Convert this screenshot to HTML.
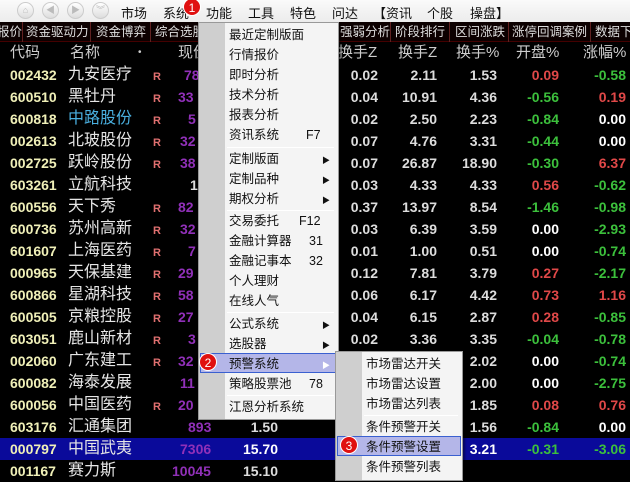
<!DOCTYPE html>
<html><head><meta charset="utf-8"><style>
*{margin:0;padding:0;box-sizing:border-box}
body{width:630px;height:468px;overflow:hidden;background:#000;position:relative;font-family:"Liberation Sans","Noto Sans CJK SC",sans-serif}
.a{position:absolute;white-space:nowrap}
#top{left:0;top:0;width:630px;height:22px;background:linear-gradient(#fafafa,#ececec);font-size:13px;color:#111}
.btn{position:absolute;top:2px;width:17px;height:17px;border-radius:50%;background:linear-gradient(#fff,#ddd);border:1px solid #ccc;color:#bbb;font-size:9px;text-align:center;line-height:15px}
#tabs{left:0;top:22px;width:630px;height:20px;background:#0c0000;border-bottom:1px solid #400;font-size:12.5px;color:#ddd}
#tabs span{position:absolute;top:1px;line-height:18px}
.sep{position:absolute;top:0;width:1px;height:20px;background:#602020}
#hdr{left:0;top:42px;width:630px;height:22px;font-size:15px;color:#ccc;line-height:22px}
.row{position:absolute;left:0;width:630px;height:22px;line-height:22px}
.c{position:absolute;left:10px;font-weight:bold;font-size:14px;color:#f0f0b8}
.n{position:absolute;left:68px;font-size:16px;color:#e6e6e6}
.r{position:absolute;left:153px;font-size:11px;font-weight:bold;color:#e07070;top:2px}
.p{position:absolute;left:184px;font-weight:bold;font-size:14px;color:#9030b8}
.v{position:absolute;text-align:right;font-weight:bold;font-size:14px;color:#ddd}
.g{color:#3cc03c}.rd{color:#e04848}.w{color:#fff}
.menu{position:absolute;background:#f4f4f4;border:1px solid #999;box-shadow:2px 2px 2px rgba(0,0,0,.4);font-size:12.5px;color:#111}
.strip{position:absolute;left:0;top:0;bottom:0;width:26px;background:#cfcfcf}
.mi{position:absolute;left:30px;height:20px;line-height:20px}
.k{position:absolute;height:20px;line-height:20px}
.ms{position:absolute;left:28px;right:4px;height:1px;background:#aaa;border-bottom:1px solid #fff}
.arr{position:absolute;right:8px;font-size:8px}
.hl{position:absolute;left:1px;right:1px;height:20px;background:#b4b6e8;border:1px solid #3a60d0}
.badge{position:absolute;width:18px;height:18px;border-radius:50%;background:#e01010;color:#fff;font-size:12px;text-align:center;line-height:18px;border:1px solid #fff}
</style></head><body>
<div id="top" class="a">
<div class="btn" style="left:17px">⌂</div><div class="btn" style="left:42px">◀</div><div class="btn" style="left:67px">▶</div><div class="btn" style="left:92px">︾</div>
<span class="a" style="left:121px;top:3px">市场</span><span class="a" style="left:163px;top:3px">系统</span><span class="a" style="left:206px;top:3px">功能</span><span class="a" style="left:248px;top:3px">工具</span><span class="a" style="left:290px;top:3px">特色</span><span class="a" style="left:332px;top:3px">问达</span><span class="a" style="left:373px;top:3px">【资讯</span><span class="a" style="left:427px;top:3px">个股</span><span class="a" style="left:470px;top:3px">操盘】</span>
</div>
<div id="tabs" class="a">
<span style="left:-3px">报价</span><div class="sep" style="left:22px"></div>
<span style="left:26px">资金驱动力</span><div class="sep" style="left:90px"></div>
<span style="left:96px">资金博弈</span><div class="sep" style="left:150px"></div>
<span style="left:155px">综合选股</span>
<span style="left:340px">强弱分析</span><div class="sep" style="left:390px"></div>
<span style="left:395px">阶段排行</span><div class="sep" style="left:449px"></div>
<span style="left:455px">区间涨跌</span><div class="sep" style="left:508px"></div>
<span style="left:512px">涨停回调案例</span><div class="sep" style="left:590px"></div>
<span style="left:595px">数据下载</span>
</div>
<div id="hdr" class="a">
<span class="a" style="left:10px">代码</span><span class="a" style="left:70px">名称</span><span class="a" style="left:138px;font-size:10px">•</span><span class="a" style="left:178px">现价</span>
<span class="a" style="left:338px">换手Z</span><span class="a" style="left:398px">换手Z</span><span class="a" style="left:456px">换手%</span><span class="a" style="left:516px">开盘%</span><span class="a" style="left:583px">涨幅%</span>
</div>

<div class="row" style="top:64px"><span class="c">002432</span><span class="n">九安医疗</span><span class="r">R</span><span class="p">78</span><span class="v" style="right:252px">0.02</span><span class="v" style="right:193px">2.11</span><span class="v" style="right:133px">1.53</span><span class="v rd" style="right:71px">0.09</span><span class="v g" style="right:4px">-0.58</span></div>
<div class="row" style="top:86px"><span class="c">600510</span><span class="n">黑牡丹</span><span class="r">R</span><span class="p" style="left:178px">33</span><span class="v" style="right:252px">0.04</span><span class="v" style="right:193px">10.91</span><span class="v" style="right:133px">4.36</span><span class="v g" style="right:71px">-0.56</span><span class="v rd" style="right:4px">0.19</span></div>
<div class="row" style="top:108px"><span class="c">600818</span><span class="n" style="color:#4ab0e0">中路股份</span><span class="r">R</span><span class="p" style="left:188px">5</span><span class="v" style="right:252px">0.02</span><span class="v" style="right:193px">2.50</span><span class="v" style="right:133px">2.23</span><span class="v g" style="right:71px">-0.84</span><span class="v w" style="right:4px">0.00</span></div>
<div class="row" style="top:130px"><span class="c">002613</span><span class="n">北玻股份</span><span class="r">R</span><span class="p" style="left:180px">32</span><span class="v" style="right:252px">0.07</span><span class="v" style="right:193px">4.76</span><span class="v" style="right:133px">3.31</span><span class="v g" style="right:71px">-0.44</span><span class="v w" style="right:4px">0.00</span></div>
<div class="row" style="top:152px"><span class="c">002725</span><span class="n">跃岭股份</span><span class="r">R</span><span class="p" style="left:180px">38</span><span class="v" style="right:252px">0.07</span><span class="v" style="right:193px">26.87</span><span class="v" style="right:133px">18.90</span><span class="v g" style="right:71px">-0.30</span><span class="v rd" style="right:4px">6.37</span></div>
<div class="row" style="top:174px"><span class="c">603261</span><span class="n">立航科技</span><span class="p" style="color:#ddd;left:190px">1</span><span class="v" style="right:252px">0.03</span><span class="v" style="right:193px">4.33</span><span class="v" style="right:133px">4.33</span><span class="v rd" style="right:71px">0.56</span><span class="v g" style="right:4px">-0.62</span></div>
<div class="row" style="top:196px"><span class="c">600556</span><span class="n">天下秀</span><span class="r">R</span><span class="p" style="left:178px">82</span><span class="v" style="right:252px">0.37</span><span class="v" style="right:193px">13.97</span><span class="v" style="right:133px">8.54</span><span class="v g" style="right:71px">-1.46</span><span class="v g" style="right:4px">-0.98</span></div>
<div class="row" style="top:218px"><span class="c">600736</span><span class="n">苏州高新</span><span class="r">R</span><span class="p" style="left:180px">32</span><span class="v" style="right:252px">0.03</span><span class="v" style="right:193px">6.39</span><span class="v" style="right:133px">3.59</span><span class="v w" style="right:71px">0.00</span><span class="v g" style="right:4px">-2.93</span></div>
<div class="row" style="top:240px"><span class="c">601607</span><span class="n">上海医药</span><span class="r">R</span><span class="p" style="left:188px">7</span><span class="v" style="right:252px">0.01</span><span class="v" style="right:193px">1.00</span><span class="v" style="right:133px">0.51</span><span class="v w" style="right:71px">0.00</span><span class="v g" style="right:4px">-0.74</span></div>
<div class="row" style="top:262px"><span class="c">000965</span><span class="n">天保基建</span><span class="r">R</span><span class="p" style="left:178px">29</span><span class="v" style="right:252px">0.12</span><span class="v" style="right:193px">7.81</span><span class="v" style="right:133px">3.79</span><span class="v rd" style="right:71px">0.27</span><span class="v g" style="right:4px">-2.17</span></div>
<div class="row" style="top:284px"><span class="c">600866</span><span class="n">星湖科技</span><span class="r">R</span><span class="p" style="left:178px">58</span><span class="v" style="right:252px">0.06</span><span class="v" style="right:193px">6.17</span><span class="v" style="right:133px">4.42</span><span class="v rd" style="right:71px">0.73</span><span class="v rd" style="right:4px">1.16</span></div>
<div class="row" style="top:306px"><span class="c">600505</span><span class="n">京粮控股</span><span class="r">R</span><span class="p" style="left:178px">27</span><span class="v" style="right:252px">0.04</span><span class="v" style="right:193px">6.15</span><span class="v" style="right:133px">2.87</span><span class="v rd" style="right:71px">0.28</span><span class="v g" style="right:4px">-0.85</span></div>
<div class="row" style="top:328px"><span class="c">603051</span><span class="n">鹿山新材</span><span class="r">R</span><span class="p" style="left:188px">3</span><span class="v" style="right:252px">0.02</span><span class="v" style="right:193px">3.36</span><span class="v" style="right:133px">3.35</span><span class="v g" style="right:71px">-0.04</span><span class="v g" style="right:4px">-0.78</span></div>
<div class="row" style="top:350px"><span class="c">002060</span><span class="n">广东建工</span><span class="r">R</span><span class="p" style="left:178px">32</span><span class="v" style="right:133px">2.02</span><span class="v w" style="right:71px">0.00</span><span class="v g" style="right:4px">-0.74</span></div>
<div class="row" style="top:372px"><span class="c">600082</span><span class="n">海泰发展</span><span class="p" style="left:180px">11</span><span class="v" style="right:133px">2.00</span><span class="v w" style="right:71px">0.00</span><span class="v g" style="right:4px">-2.75</span></div>
<div class="row" style="top:394px"><span class="c">600056</span><span class="n">中国医药</span><span class="r">R</span><span class="p" style="left:178px">20</span><span class="v" style="right:133px">1.85</span><span class="v rd" style="right:71px">0.08</span><span class="v rd" style="right:4px">0.76</span></div>
<div class="row" style="top:416px"><span class="c">603176</span><span class="n">汇通集团</span><span class="p" style="left:188px">893</span><span class="v" style="right:352px">1.50</span><span class="v" style="right:133px">1.56</span><span class="v g" style="right:71px">-0.84</span><span class="v w" style="right:4px">0.00</span></div>
<div class="row" style="top:438px;background:#0a0a9a"><span class="c">000797</span><span class="n">中国武夷</span><span class="p" style="left:180px">7306</span><span class="v w" style="right:352px">15.70</span><span class="v w" style="right:133px">3.21</span><span class="v g" style="right:71px">-0.31</span><span class="v g" style="right:4px">-3.06</span></div>
<div class="row" style="top:460px"><span class="c">001167</span><span class="n">赛力斯</span><span class="p" style="left:172px">10045</span><span class="v" style="right:352px">15.10</span></div>

<div class="menu" style="left:198px;top:22px;width:141px;height:398px">
<div class="strip"></div>
<div class="mi" style="top:2px">最近定制版面</div>
<div class="mi" style="top:22px">行情报价</div>
<div class="mi" style="top:42px">即时分析</div>
<div class="mi" style="top:62px">技术分析</div>
<div class="mi" style="top:82px">报表分析</div>
<div class="mi" style="top:102px">资讯系统</div><span class="k" style="left:107px;top:102px">F7</span>
<div class="ms" style="top:124px"></div>
<div class="mi" style="top:126px">定制版面</div><span class="arr" style="top:132px">▶</span>
<div class="mi" style="top:146px">定制品种</div><span class="arr" style="top:152px">▶</span>
<div class="mi" style="top:166px">期权分析</div><span class="arr" style="top:172px">▶</span>
<div class="ms" style="top:187px"></div>
<div class="mi" style="top:188px">交易委托</div><span class="k" style="left:100px;top:188px">F12</span>
<div class="mi" style="top:208px">金融计算器</div><span class="k" style="left:110px;top:208px">31</span>
<div class="mi" style="top:228px">金融记事本</div><span class="k" style="left:110px;top:228px">32</span>
<div class="mi" style="top:248px">个人理财</div>
<div class="mi" style="top:268px">在线人气</div>
<div class="ms" style="top:289px"></div>
<div class="mi" style="top:291px">公式系统</div><span class="arr" style="top:297px">▶</span>
<div class="mi" style="top:311px">选股器</div><span class="arr" style="top:317px">▶</span>
<div class="hl" style="top:330px"></div>
<div class="mi" style="top:331px">预警系统</div><span class="arr" style="top:337px;color:#fff">▶</span>
<div class="mi" style="top:351px">策略股票池</div><span class="k" style="left:110px;top:351px">78</span>
<div class="ms" style="top:372px"></div>
<div class="mi" style="top:374px">江恩分析系统</div>
</div>

<div class="menu" style="left:335px;top:351px;width:128px;height:130px">
<div class="strip"></div>
<div class="mi" style="top:2px">市场雷达开关</div>
<div class="mi" style="top:22px">市场雷达设置</div>
<div class="mi" style="top:42px">市场雷达列表</div>
<div class="ms" style="top:63px"></div>
<div class="mi" style="top:65px">条件预警开关</div>
<div class="hl" style="top:84px"></div>
<div class="mi" style="top:85px">条件预警设置</div>
<div class="mi" style="top:105px">条件预警列表</div>
</div>

<div class="badge" style="left:183px;top:-2px">1</div>
<div class="badge" style="left:199px;top:353px">2</div>
<div class="badge" style="left:340px;top:436px">3</div>
</body></html>
